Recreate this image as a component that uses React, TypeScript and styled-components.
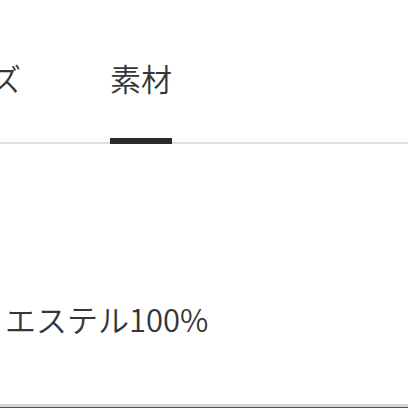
import { FC, useState } from 'react';
import styled, { createGlobalStyle } from 'styled-components';

const COLOR_TEXT = '#363636';
const COLOR_LINE = '#e0e0e0';

const GlobalStyle = createGlobalStyle`
  html, body {
    margin: 0;
    padding: 0;
    background: #ffffff;
    overflow: hidden;
  }
  body {
    font-family: 'Noto Sans CJK JP', 'Noto Sans', sans-serif;
    color: ${COLOR_TEXT};
  }
`;

const StyledPage = styled.div`
  width: 408px;
  height: 408px;
  display: flex;
  flex-direction: column;
  overflow: hidden;
`;

const StyledTabBar = styled.div`
  box-sizing: border-box;
  height: 144px;
  border-bottom: 2px solid ${COLOR_LINE};
  display: flex;
  gap: 89px;
  margin-left: -71px;
`;

const StyledTab = styled.div<{ active: boolean }>`
  box-sizing: border-box;
  height: 144px;
  margin-bottom: -2px;
  padding-top: 56px;
  font-size: 31px;
  font-weight: 350;
  line-height: 44px;
  white-space: nowrap;
  color: ${COLOR_TEXT};
  border-bottom: 6px solid ${({ active }) => (active ? '#2b2b2b' : 'transparent')};
  cursor: pointer;
`;

const StyledContent = styled.div`
  flex: 1;
  padding-top: 153px;
  margin-left: -57px;
`;

const StyledMaterial = styled.p`
  margin: 0;
  font-size: 31px;
  font-weight: 350;
  line-height: 44px;
  white-space: nowrap;
  color: ${COLOR_TEXT};
`;

const StyledFooterLine = styled.div`
  height: 3px;
  background: #d4d4d4;
  border-bottom: 1px solid #555555;
`;

type TTabName = 'size' | 'material';

const App: FC = () => {
  const [activeTab, setActiveTab] = useState<TTabName>('material');

  return (
    <>
      <GlobalStyle />
      <StyledPage>
        <StyledTabBar>
          <StyledTab active={activeTab === 'size'} onClick={() => setActiveTab('size')}>
            サイズ
          </StyledTab>
          <StyledTab active={activeTab === 'material'} onClick={() => setActiveTab('material')}>
            素材
          </StyledTab>
        </StyledTabBar>

        <StyledContent>
          <StyledMaterial>ポリエステル100%</StyledMaterial>
        </StyledContent>

        <StyledFooterLine />
      </StyledPage>
    </>
  );
};

export default App;
